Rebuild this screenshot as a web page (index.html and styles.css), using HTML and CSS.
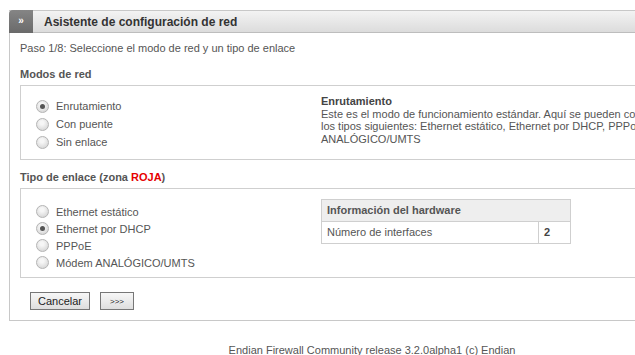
FILE: index.html
```html
<!DOCTYPE html>
<html lang="es">
<head>
    <meta charset="UTF-8">
    <title>Asistente de configuración de red</title>
    <link rel="stylesheet" href="styles.css">
</head>
<body>
    <div class="page">
        <!-- Wizard panel -->
        <div class="panel">
            <div class="panel-head">
                <span class="toggle">&raquo;</span>
                <span class="panel-title">Asistente de configuración de red</span>
            </div>

            <div class="panel-body">
                <p class="step">Paso 1/8: Seleccione el modo de red y un tipo de enlace</p>

                <h3 class="section">Modos de red</h3>
                <div class="box box-modes">
                    <div class="choices">
                        <label class="choice"><input type="radio" name="mode" checked> Enrutamiento</label>
                        <label class="choice"><input type="radio" name="mode"> Con puente</label>
                        <label class="choice"><input type="radio" name="mode"> Sin enlace</label>
                    </div>
                    <div class="help">
                        <strong>Enrutamiento</strong><br>
                        Este es el modo de funcionamiento estándar. Aquí se pueden configurar<br>
                        los tipos siguientes: Ethernet estático, Ethernet por DHCP, PPPoE, Módem<br>
                        ANALÓGICO/UMTS
                    </div>
                </div>

                <h3 class="section">Tipo de enlace (zona <span class="red">ROJA</span>)</h3>
                <div class="box box-uplink">
                    <div class="choices">
                        <label class="choice"><input type="radio" name="uplink"> Ethernet estático</label>
                        <label class="choice"><input type="radio" name="uplink" checked> Ethernet por DHCP</label>
                        <label class="choice"><input type="radio" name="uplink"> PPPoE</label>
                        <label class="choice"><input type="radio" name="uplink"> Módem ANALÓGICO/UMTS</label>
                    </div>
                    <div class="help">
                        <table class="hw">
                            <tr><th colspan="2">Información del hardware</th></tr>
                            <tr><td>Número de interfaces</td><td class="num">2</td></tr>
                        </table>
                    </div>
                </div>

                <div class="actions">
                    <button type="button" class="btn">Cancelar</button>
                    <button type="button" class="btn btn-next">&gt;&gt;&gt;</button>
                </div>
            </div>
        </div>

        <div class="footer">Endian Firewall Community release 3.2.0alpha1 (c) Endian</div>
    </div>
</body>
</html>
```

FILE: styles.css
```css
html, body {
    margin: 0;
    overflow: hidden;
    background: #fff;
}

body {
    font-family: "Liberation Sans", Arial, sans-serif;
    font-size: 11px;
    color: #555;
}

.page {
    width: 726px;
    padding: 10px 0 0 9px;
}

/* panel */
.panel {
    border-left: 1px solid #c8c8c8;
    border-bottom: 1px solid #c8c8c8;
}

.panel-head {
    display: flex;
    align-items: center;
    height: 21px;
    border-top: 1px solid #c8c8c8;
    border-bottom: 1px solid #bdbdbd;
    background: linear-gradient(#f3f3f3, #dcdcdc);
    margin-left: -1px;
}

.toggle {
    width: 24px;
    height: 23px;
    margin: -1px 0;
    border-top-left-radius: 4px;
    background: linear-gradient(#858585, #6a6a6a);
    color: #fff;
    font-size: 10px;
    font-weight: bold;
    text-align: center;
    line-height: 21px;
}

.panel-title {
    margin-left: 11px;
    font-size: 12px;
    font-weight: bold;
    color: #333;
}

.panel-body {
    padding: 8px 0 10px 10px;
}

.step {
    margin: 0;
    line-height: 14px;
}

.section {
    margin: 12px 0 4px;
    font-size: 11px;
    line-height: 14px;
    font-weight: bold;
    color: #555;
}

.red {
    color: #e60000;
}

/* option boxes */
.box {
    display: grid;
    grid-template-columns: 285px 1fr;
    border: 1px solid #cfcfcf;
    padding-left: 15px;
}

.box-modes {
    padding-top: 11px;
    padding-bottom: 8px;
}

.box-modes + .section {
    margin-top: 10px;
}

.box-uplink {
    padding-top: 14px;
    padding-bottom: 6px;
}

.choice {
    display: flex;
    align-items: center;
    gap: 7px;
    height: 18px;
}

.box-uplink .choice {
    height: 17px;
}

.choice input {
    appearance: none;
    -webkit-appearance: none;
    width: 13px;
    height: 13px;
    margin: 0;
    border: 1px solid #b4b4b4;
    border-radius: 50%;
    background: radial-gradient(circle at 45% 35%, #f6f6f6 20%, #d2d2d2 90%);
    position: relative;
}

.choice input:checked::after {
    content: "";
    position: absolute;
    left: 3px;
    top: 3px;
    width: 5px;
    height: 5px;
    border-radius: 50%;
    background: #555;
}

.help {
    line-height: 12.5px;
    margin-top: -2px;
}

.help strong {
    color: #444;
}

.box-uplink .help {
    margin-top: -4px;
}

/* hardware table */
.hw {
    border-collapse: collapse;
    width: 250px;
}

.hw th, .hw td {
    border: 1px solid #cfcfcf;
    height: 21px;
    padding: 0 5px;
    text-align: left;
}

.hw th {
    background: #eee;
    font-weight: bold;
}

.hw .num {
    width: 21px;
    font-weight: bold;
    color: #444;
}

/* buttons */
.actions {
    display: flex;
    gap: 10px;
    margin-top: 14px;
    padding-left: 10px;
}

.btn {
    height: 18px;
    padding: 0 6px;
    border: 1px solid #777;
    background: linear-gradient(#f7f7f7, #dedede);
    font-family: "Liberation Sans", Arial, sans-serif;
    font-size: 11px;
    color: #222;
}

.btn:first-child {
    width: 60px;
}

.btn-next {
    width: 34px;
    font-size: 8px;
}

.footer {
    margin-top: 22px;
    text-align: center;
    line-height: 14px;
    color: #555;
}
```
